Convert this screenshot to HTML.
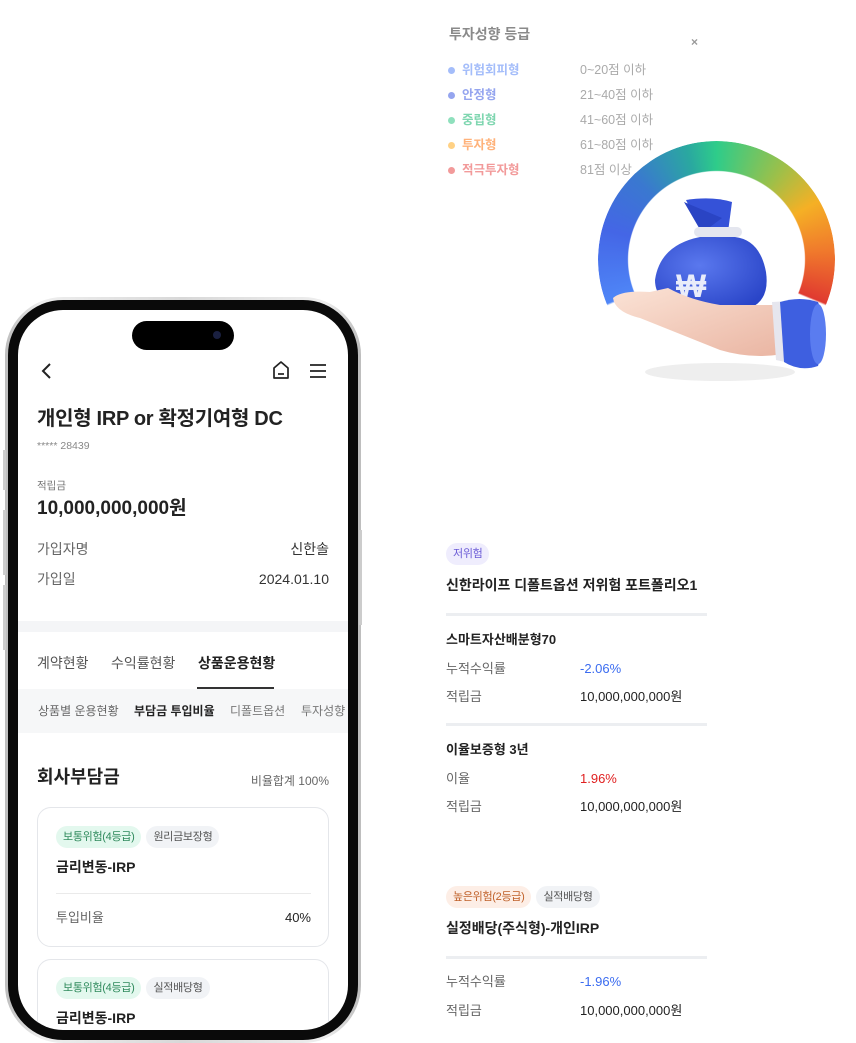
<!DOCTYPE html>
<html><head><meta charset="utf-8">
<style>
*{margin:0;padding:0;box-sizing:border-box}
body{width:856px;height:1042px;overflow:hidden;background:#fff;position:relative;font-family:"Liberation Sans","Noto Sans CJK KR",sans-serif;color:#222}
.a{position:absolute;white-space:nowrap;line-height:1}
.g{color:#666}
.chips{position:absolute;display:flex;gap:5px}
.chip{height:22px;border-radius:11px;font-size:11px;line-height:22px;padding:0 7px;white-space:nowrap;letter-spacing:-0.3px}
.dot{position:absolute;width:7px;height:7px;border-radius:50%;left:448px}
.div{position:absolute;left:446px;width:261px;height:3px;background:#eceef1}
</style></head><body>

<div class="a" style="left:449px;top:27px;font-size:14px;color:#8a8a8a;font-weight:bold">투자성향 등급</div>
<div class="a" style="left:691px;top:36px;font-size:12px;color:#999;font-weight:bold">×</div>
<div class="dot" style="top:67px;background:#a4bdfa"></div><div class="a" style="left:462px;top:64px;font-size:12.5px;color:#a4bdfa;font-weight:bold">위험회피형</div><div class="a" style="left:580px;top:64px;font-size:12.5px;color:#aaa">0~20점 이하</div>
<div class="dot" style="top:92px;background:#95a5ef"></div><div class="a" style="left:462px;top:89px;font-size:12.5px;color:#95a5ef;font-weight:bold">안정형</div><div class="a" style="left:580px;top:89px;font-size:12.5px;color:#aaa">21~40점 이하</div>
<div class="dot" style="top:117px;background:#8fe0bd"></div><div class="a" style="left:462px;top:114px;font-size:12.5px;color:#7fd6b0;font-weight:bold">중립형</div><div class="a" style="left:580px;top:114px;font-size:12.5px;color:#aaa">41~60점 이하</div>
<div class="dot" style="top:142px;background:#ffd184"></div><div class="a" style="left:462px;top:139px;font-size:12.5px;color:#ffb27a;font-weight:bold">투자형</div><div class="a" style="left:580px;top:139px;font-size:12.5px;color:#aaa">61~80점 이하</div>
<div class="dot" style="top:167px;background:#f29a9a"></div><div class="a" style="left:462px;top:164px;font-size:12.5px;color:#f29a9a;font-weight:bold">적극투자형</div><div class="a" style="left:580px;top:164px;font-size:12.5px;color:#aaa">81점 이상</div>

<div style="position:absolute;left:598px;top:141px;width:237px;height:237px;border-radius:50%;
background:conic-gradient(from 0deg,#2ecc8a 0deg,#9bc04a 35deg,#f5b025 60deg,#f07a2c 85deg,#e03a30 112deg,transparent 113deg,transparent 247deg,#4f86f7 248deg,#4466e6 285deg,#3a78d0 315deg,#2aa8a0 345deg,#2ecc8a 360deg);
-webkit-mask:radial-gradient(circle,transparent 88px,#000 89px);mask:radial-gradient(circle,transparent 88px,#000 89px)"></div>
<svg style="position:absolute;left:600px;top:190px" width="240" height="200" viewBox="600 190 240 200">
<defs><radialGradient id="bg" cx="0.4" cy="0.4" r="0.7"><stop offset="0" stop-color="#5a78ee"/><stop offset="1" stop-color="#2a45c8"/></radialGradient>
<linearGradient id="hd" x1="0" y1="0" x2="1" y2="1"><stop offset="0" stop-color="#fbe3d6"/><stop offset="1" stop-color="#e9b3a0"/></linearGradient></defs>
<ellipse cx="720" cy="372" rx="75" ry="9" fill="#eee"/>
<path d="M686 200 Q712 196 732 202 L728 232 L702 233 Z" fill="#3552d8"/>
<path d="M684 202 L702 233 L722 218 Z" fill="#2a44c4"/>
<rect x="694" y="227" width="48" height="10" rx="5" fill="#e4e6ef"/>
<path d="M700 237 Q660 245 655 280 Q655 305 690 308 L750 308 Q770 300 766 272 Q760 240 735 237 Z" fill="url(#bg)"/>
<text x="676" y="297" font-size="32" font-family="Liberation Sans" font-weight="bold" fill="#e8ecfa">₩</text>
<path d="M613 298 Q622 290 650 292 L668 288 Q690 300 720 305 Q760 305 785 305 L800 350 Q760 362 720 350 Q670 330 640 318 Q615 312 613 298 Z" fill="url(#hd)"/>
<path d="M772 302 L808 300 L812 368 L776 360 Z" fill="#e6e6ee"/>
<path d="M780 302 Q800 296 818 302 Q830 330 818 366 Q800 372 784 362 Z" fill="#3e5fe0"/>
<ellipse cx="818" cy="334" rx="8" ry="30" fill="#5a7cf0"/>
</svg>

<div style="position:absolute;left:5px;top:297px;width:356px;height:746px;border-radius:58px;background:linear-gradient(90deg,#bdbdbd,#eee 10%,#d8d8d8 50%,#eee 90%,#bdbdbd);"></div>
<div style="position:absolute;left:3px;top:450px;width:3px;height:40px;background:#ccc"></div>
<div style="position:absolute;left:3px;top:510px;width:3px;height:65px;background:#ccc"></div>
<div style="position:absolute;left:3px;top:585px;width:3px;height:65px;background:#ccc"></div>
<div style="position:absolute;left:359px;top:530px;width:3px;height:95px;background:#ccc"></div>
<div style="position:absolute;left:8px;top:300px;width:350px;height:740px;border-radius:55px;background:#0a0a0a"></div>
<div style="position:absolute;left:18px;top:310px;width:330px;height:720px;border-radius:45px;background:#fff;overflow:hidden">
 <div style="position:absolute;left:114px;top:11px;width:102px;height:29px;border-radius:15px;background:#000"></div>
 <div style="position:absolute;left:195px;top:21px;width:8px;height:8px;border-radius:50%;background:#1a2040"></div>
 <div style="position:absolute;left:19px;top:649px;width:292px;height:130px;border:1px solid #e4e6ea;border-radius:14px"></div>
 <div class="chips" style="left:38px;top:667px"><div class="chip" style="background:#e3f8ee;color:#2f8a5c">보통위험(4등급)</div><div class="chip" style="background:#f1f3f6;color:#555">실적배당형</div></div>
 <div class="a" style="left:38px;top:701px;font-size:14px;font-weight:bold">금리변동-IRP</div>
</div>
<svg style="position:absolute;left:40px;top:362px" width="14" height="18"><path d="M10 2 L3 9 L10 16" stroke="#222" stroke-width="2" fill="none"/></svg>
<svg style="position:absolute;left:271px;top:360px" width="20" height="20"><path d="M3 8 L10 2 L17 8 L17 18 L3 18 Z" stroke="#222" stroke-width="1.7" fill="none" stroke-linejoin="round"/><path d="M7 14 H13" stroke="#222" stroke-width="1.7"/></svg>
<svg style="position:absolute;left:308px;top:362px" width="20" height="18"><path d="M2 3 H18 M2 9 H18 M2 15 H18" stroke="#222" stroke-width="1.8"/></svg>

<div class="a" style="left:37px;top:409px;font-size:20px;font-weight:bold;letter-spacing:-0.3px">개인형 IRP or 확정기여형 DC</div>
<div class="a" style="left:37px;top:441px;font-size:10.5px;color:#888">***** 28439</div>
<div class="a" style="left:37px;top:481px;font-size:10.5px;color:#777">적립금</div>
<div class="a" style="left:37px;top:499px;font-size:19px;font-weight:bold">10,000,000,000원</div>
<div class="a g" style="left:37px;top:542px;font-size:14px">가입자명</div>
<div class="a" style="right:527px;top:542px;font-size:14px;color:#333">신한솔</div>
<div class="a g" style="left:37px;top:572px;font-size:14px">가입일</div>
<div class="a" style="right:527px;top:572px;font-size:14px;color:#333">2024.01.10</div>
<div style="position:absolute;left:18px;top:621px;width:330px;height:11px;background:#f4f5f7"></div>
<div class="a" style="left:37px;top:656px;font-size:14px;color:#555">계약현황</div>
<div class="a" style="left:111px;top:656px;font-size:14px;color:#555">수익률현황</div>
<div class="a" style="left:198px;top:656px;font-size:14px;font-weight:bold">상품운용현황</div>
<div style="position:absolute;left:197px;top:687px;width:77px;height:2px;background:#333"></div>
<div style="position:absolute;left:18px;top:689px;width:330px;height:44px;background:#f6f7f8"></div>
<div class="a" style="left:38px;top:705px;font-size:12px;color:#666">상품별 운용현황</div>
<div class="a" style="left:134px;top:705px;font-size:12px;font-weight:bold">부담금 투입비율</div>
<div class="a" style="left:230px;top:705px;font-size:12px;color:#777">디폴트옵션</div>
<div class="a" style="left:301px;top:705px;font-size:12px;color:#777">투자성향</div>
<div class="a" style="left:37px;top:768px;font-size:18px;font-weight:bold">회사부담금</div>
<div class="a" style="right:527px;top:775px;font-size:12px;color:#666">비율합계 100%</div>

<div style="position:absolute;left:37px;top:807px;width:292px;height:140px;border:1px solid #e4e6ea;border-radius:14px"></div>
<div class="chips" style="left:56px;top:826px"><div class="chip" style="background:#e3f8ee;color:#2f8a5c">보통위험(4등급)</div><div class="chip" style="background:#f1f3f6;color:#555">원리금보장형</div></div>
<div class="a" style="left:56px;top:860px;font-size:14px;font-weight:bold">금리변동-IRP</div>
<div style="position:absolute;left:56px;top:893px;width:255px;height:1px;background:#eaeaea"></div>
<div class="a g" style="left:56px;top:911px;font-size:13px">투입비율</div>
<div class="a" style="right:545px;top:911px;font-size:13px">40%</div>

<div class="chips" style="left:446px;top:543px"><div class="chip" style="background:#efedfd;color:#6b5bd6">저위험</div></div>
<div class="a" style="left:446px;top:578px;font-size:14px;font-weight:bold">신한라이프 디폴트옵션 저위험 포트폴리오1</div>
<div class="div" style="top:613px"></div>
<div class="a" style="left:446px;top:633px;font-size:13px;font-weight:bold">스마트자산배분형70</div>
<div class="a g" style="left:446px;top:662px;font-size:13px">누적수익률</div><div class="a" style="left:580px;top:662px;font-size:13px;color:#3b6cf0">-2.06%</div>
<div class="a g" style="left:446px;top:690px;font-size:13px">적립금</div><div class="a" style="left:580px;top:690px;font-size:13px">10,000,000,000원</div>
<div class="div" style="top:723px"></div>
<div class="a" style="left:446px;top:743px;font-size:13px;font-weight:bold">이율보증형 3년</div>
<div class="a g" style="left:446px;top:772px;font-size:13px">이율</div><div class="a" style="left:580px;top:772px;font-size:13px;color:#e02020">1.96%</div>
<div class="a g" style="left:446px;top:800px;font-size:13px">적립금</div><div class="a" style="left:580px;top:800px;font-size:13px">10,000,000,000원</div>

<div class="chips" style="left:446px;top:886px"><div class="chip" style="background:#fdeee6;color:#c0612a">높은위험(2등급)</div><div class="chip" style="background:#f1f3f6;color:#555">실적배당형</div></div>
<div class="a" style="left:446px;top:921px;font-size:14px;font-weight:bold">실정배당(주식형)-개인IRP</div>
<div class="div" style="top:956px"></div>
<div class="a g" style="left:446px;top:975px;font-size:13px">누적수익률</div><div class="a" style="left:580px;top:975px;font-size:13px;color:#3b6cf0">-1.96%</div>
<div class="a g" style="left:446px;top:1004px;font-size:13px">적립금</div><div class="a" style="left:580px;top:1004px;font-size:13px">10,000,000,000원</div>
</body></html>
